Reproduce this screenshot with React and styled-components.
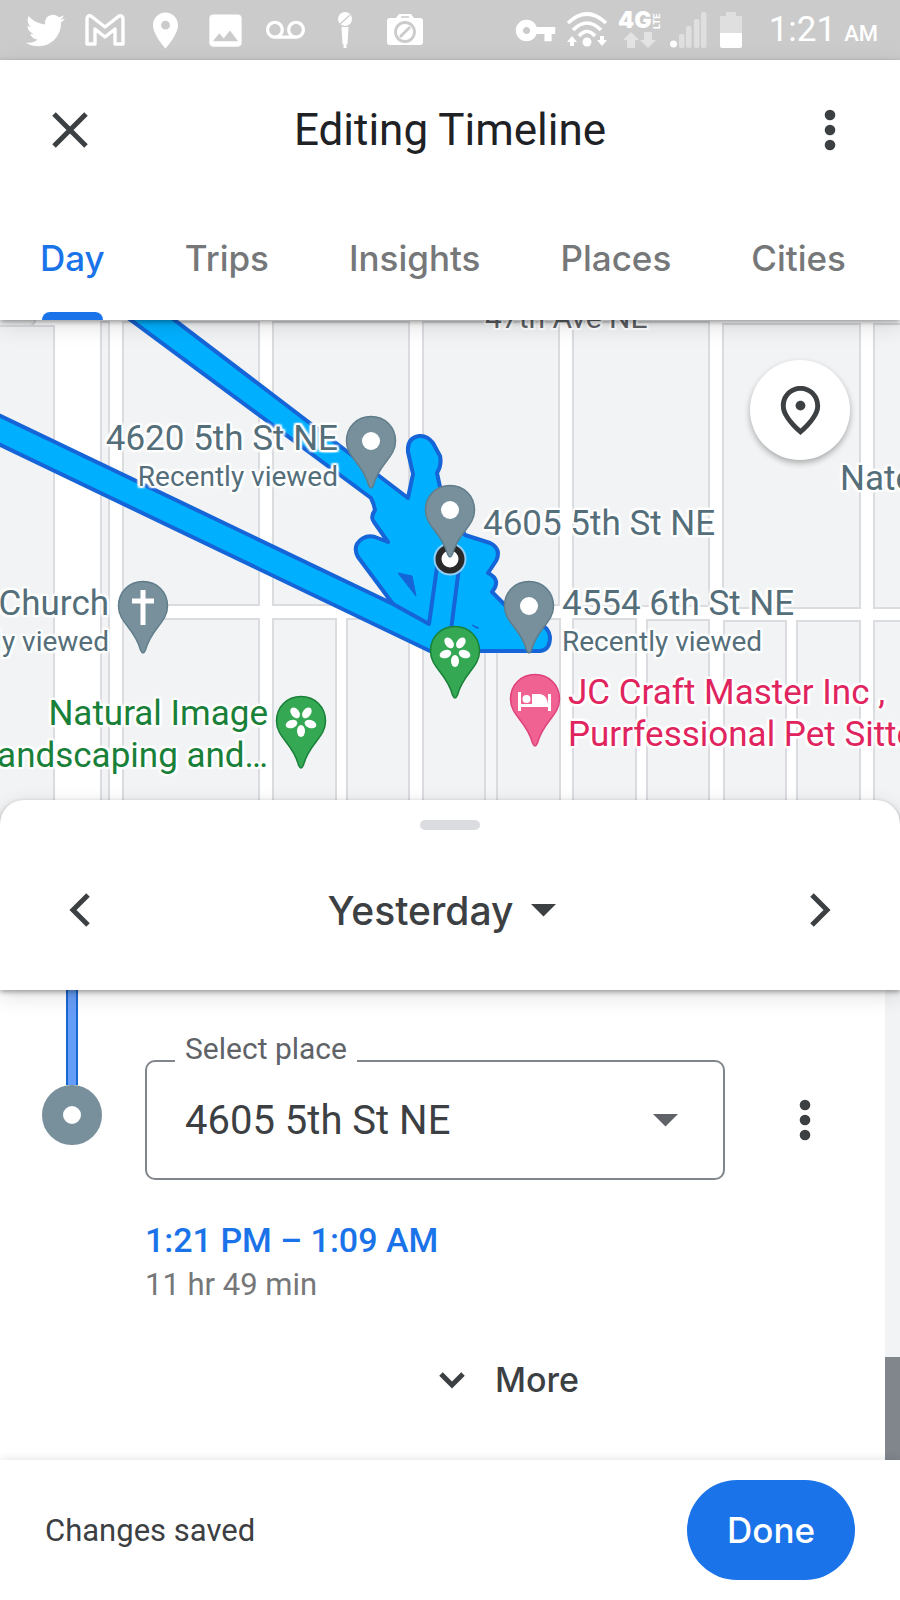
import { useState } from "react";
import styled, { createGlobalStyle } from "styled-components";
import { FaTwitter } from "react-icons/fa";
import {
  MdImage,
  MdOutlinePlace,
  MdPlace,
  MdVoicemail,
  MdVpnKey,
} from "react-icons/md";

const GlobalStyle = createGlobalStyle`
  * {
    box-sizing: border-box;
  }

  body {
    margin: 0;
    background: #fff;
    color: #3c4043;
    font-family: Roboto, sans-serif;
  }

  button, select {
    margin: 0;
    padding: 0;
    border: none;
    background: none;
    color: inherit;
    font-family: inherit;
    cursor: pointer;
  }

  svg {
    display: block;
    flex: none;
  }
`;

const Screen = styled.div`
  display: flex;
  flex-direction: column;
  min-height: 100vh;
  overflow: hidden;
`;

/* status bar */

const StatusBar = styled.div`
  display: flex;
  align-items: center;
  justify-content: space-between;
  height: 60px;
  padding: 0 22px 0 15px;
  background: #cbcbcb;
  color: #fff;
`;

const Notifications = styled.div`
  display: flex;
`;

const NotificationIcon = styled.div`
  display: flex;
  align-items: center;
  justify-content: center;
  width: 60px;
`;

const SystemIcons = styled.div`
  display: flex;
  align-items: center;
  gap: 9px;
`;

const Clock = styled.div`
  margin-left: 18px;
  padding-top: 4px;
  font-size: 35px;
  line-height: 40px;

  small {
    margin-left: 8px;
    font-size: 22px;
    font-weight: 500;
  }
`;

/* header */

const Header = styled.header`
  position: relative;
  z-index: 2;
  background: #fff;
  box-shadow: 0 2px 5px rgba(0, 0, 0, 0.35), 0 6px 22px rgba(0, 0, 0, 0.12);
`;

const Toolbar = styled.div`
  display: flex;
  align-items: center;
  justify-content: space-between;
  height: 140px;
  padding: 0 40px;
`;

const IconButton = styled.button`
  display: flex;
  align-items: center;
  justify-content: center;
  width: 60px;
  height: 60px;
  color: #3c4043;
`;

const Title = styled.h1`
  margin: 0;
  color: #202124;
  font-size: 44px;
  font-weight: 400;
  line-height: 56px;
`;

const Tabs = styled.nav`
  display: flex;
  justify-content: space-between;
  height: 120px;
  padding: 0 54px 0 40px;
`;

const Tab = styled.button`
  position: relative;
  padding-bottom: 4px;
  color: ${(props) => (props.$active ? "#1a73e8" : "#757779")};
  font-family: Inter, sans-serif;
  font-size: 35px;
  font-weight: 500;

  &::after {
    content: "";
    display: ${(props) => (props.$active ? "block" : "none")};
    position: absolute;
    right: 2px;
    bottom: 0;
    left: 2px;
    height: 8px;
    border-radius: 8px 8px 0 0;
    background: #1a73e8;
  }
`;

/* map */

const MapArea = styled.section`
  position: relative;
  height: 504px;
  overflow: hidden;
  background: #f1f3f4;
`;

const MapCanvas = styled.div`
  position: absolute;
  top: 0;
  left: 50%;
  width: 900px;
  height: 504px;
  margin-left: -450px;
`;

const MapPin = styled.svg`
  position: absolute;
  top: ${(props) => props.$y}px;
  left: ${(props) => props.$x - 26}px;
`;

const MapLabel = styled.div`
  position: absolute;
  top: ${(props) => props.$y}px;
  ${(props) =>
    props.$end ? `right: ${900 - props.$x}px;` : `left: ${props.$x}px;`}
  color: ${(props) => props.$color || "#546e7a"};
  font-size: 35px;
  line-height: 42px;
  text-align: ${(props) => (props.$end ? "right" : "left")};
  white-space: nowrap;
  text-shadow: 2px 0 1px #fff, -2px 0 1px #fff, 0 2px 1px #fff, 0 -2px 1px #fff,
    2px 2px 2px #fff, -2px -2px 2px #fff, 2px -2px 2px #fff, -2px 2px 2px #fff;

  small {
    display: block;
    font-size: 28px;
    line-height: 34px;
  }
`;

const PlaceButton = styled.button`
  position: absolute;
  top: 40px;
  right: 50px;
  display: flex;
  align-items: center;
  justify-content: center;
  width: 100px;
  height: 100px;
  border-radius: 50%;
  background: #fff;
  color: #3c4043;
  box-shadow: 0 3px 6px rgba(0, 0, 0, 0.3);
`;

/* bottom sheet */

const Sheet = styled.section`
  position: relative;
  z-index: 1;
  height: 190px;
  margin-top: -24px;
  padding-top: 20px;
  border-radius: 24px 24px 0 0;
  background: #fff;
  box-shadow: 0 2px 5px rgba(0, 0, 0, 0.35), 0 6px 22px rgba(0, 0, 0, 0.12);
`;

const Handle = styled.div`
  width: 60px;
  height: 10px;
  margin: 0 auto;
  border-radius: 5px;
  background: #dadce0;
`;

const DayPicker = styled.div`
  display: flex;
  align-items: center;
  justify-content: space-between;
  height: 160px;
  padding: 0 50px;
`;

const DayButton = styled.button`
  display: flex;
  align-items: center;
  gap: 18px;
  margin-right: 16px;
  font-family: Inter, sans-serif;
  font-size: 39px;
  font-weight: 500;
`;

/* timeline */

const Timeline = styled.main`
  display: flex;
  flex: 1;
`;

const Rail = styled.div`
  display: flex;
  flex-direction: column;
  align-items: center;
  width: 60px;
  margin-left: 42px;
`;

const RailLine = styled.div`
  width: 12px;
  height: 95px;
  border: solid #1967d2;
  border-width: 0 2px;
  background: #669df6;
`;

const RailStop = styled.div`
  width: 60px;
  height: 60px;
  border: 21px solid #78909c;
  border-radius: 50%;
`;

const Visit = styled.div`
  flex: 1;
  padding: 70px 50px 50px 43px;
`;

const PlaceRow = styled.div`
  display: flex;
  align-items: center;
  justify-content: space-between;
`;

const Field = styled.div`
  position: relative;
  flex: 1;
  max-width: 580px;

  label {
    position: absolute;
    top: -29px;
    left: 30px;
    padding: 0 10px;
    background: #fff;
    color: #5f6368;
    font-size: 30px;
    line-height: 36px;
  }

  select {
    width: 100%;
    height: 120px;
    padding: 0 38px;
    border: 2px solid #80868b;
    border-radius: 10px;
    appearance: none;
    color: #3c4043;
    font-size: 40px;
  }

  svg {
    position: absolute;
    top: 54px;
    right: 47px;
    color: #5f6368;
    pointer-events: none;
  }
`;

const TimeRange = styled.button`
  display: block;
  margin-top: 36px;
  color: #1a73e8;
  font-size: 34px;
  font-weight: 500;
  line-height: 48px;
`;

const Duration = styled.div`
  color: #757779;
  font-size: 31px;
  line-height: 42px;
`;

const MoreButton = styled.button`
  display: flex;
  align-items: center;
  gap: 30px;
  margin: 50px auto 0;
  padding-left: 38px;
  font-family: Inter, sans-serif;
  font-size: 34px;
  font-weight: 500;
  line-height: 48px;
`;

const ScrollTrack = styled.div`
  display: flex;
  align-items: flex-end;
  width: 15px;
  background: #f1f3f4;
`;

const ScrollThumb = styled.div`
  width: 100%;
  height: 103px;
  background: #80868b;
`;

const Footer = styled.footer`
  position: relative;
  display: flex;
  align-items: center;
  justify-content: space-between;
  height: 140px;
  padding: 0 45px;
  background: #fff;
  box-shadow: 0 0 10px rgba(0, 0, 0, 0.12);
  font-size: 31px;
`;

const DoneButton = styled.button`
  height: 100px;
  padding: 0 40px;
  border-radius: 50px;
  background: #1a73e8;
  color: #fff;
  font-family: Inter, sans-serif;
  font-size: 35px;
  font-weight: 500;
`;

/* icons */

const GmailIcon = () => (
  <svg width="42" height="34" viewBox="0 0 42 34" fill="none" stroke="#fff" strokeWidth="3.4" strokeLinejoin="round">
    <path d="M3 31V6Q3 2 7 3L21 14 35 3Q39 2 39 6V31H31V16L21 24 11 16V31Z" />
  </svg>
);

const MicIcon = () => (
  <svg width="16" height="38" viewBox="0 0 16 38" fill="#fff">
    <circle cx="8" cy="8" r="7" />
    <path d="M3 13 13 4" stroke="#cbcbcb" strokeWidth="1.2" />
    <path d="M4.500 16H11.500L10.500 33H9.500V37H6.500V33H5.500Z" />
  </svg>
);

const CameraOffIcon = () => (
  <svg width="36" height="32" viewBox="0 0 36 32">
    <path d="M3 4H9L12 0H24L27 4H33Q36 4 36 7V28Q36 31 33 31H3Q0 31 0 28V7Q0 4 3 4Z" fill="#fff" />
    <path d="M14 3H22" stroke="#cbcbcb" strokeWidth="1.500" />
    <circle cx="18" cy="18" r="9.500" fill="none" stroke="#cbcbcb" strokeWidth="2.800" />
    <path d="M13 23 23 13" stroke="#cbcbcb" strokeWidth="2.800" />
  </svg>
);

const WifiIcon = () => (
  <svg width="42" height="36" viewBox="0 0 42 36" fill="none" stroke="#fff" strokeWidth="3.600">
    <path d="M2 11Q21-7 40 11" />
    <path d="M7 18Q21 4 35 18" />
    <path d="M13 24Q21 15 29 24" />
    <circle cx="21" cy="30" r="4.500" fill="#fff" stroke="none" />
    <path d="M6 24L1 30H4V34H8V30H11ZM36 34L31 28H34V24H38V28H41Z" fill="#fff" stroke="none" />
  </svg>
);

const LteIcon = () => (
  <svg width="44" height="38" viewBox="0 0 44 38">
    <text x="1" y="17" fill="#fff" fontFamily="Inter, sans-serif" fontSize="23" fontWeight="900">4G</text>
    <text transform="translate(36 18) rotate(-90)" x="0" y="7" fill="#fff" fontFamily="Inter, sans-serif" fontSize="9" fontWeight="700">LTE</text>
    <path d="M14 21 6 29H10V37H18V29H22ZM31 37 23 29H27V21H35V29H39Z" fill="#e3e3e3" />
  </svg>
);

const SignalIcon = () => (
  <svg width="41" height="36" viewBox="0 0 41 36" fill="#dfdfdf">
    <circle cx="3.500" cy="32" r="3.500" fill="#fff" />
    <rect x="9" y="22" width="5.500" height="14" rx="2" />
    <rect x="16" y="14" width="5.500" height="22" rx="2" />
    <rect x="24" y="7" width="5.500" height="29" rx="2" />
    <rect x="31" y="0" width="5.500" height="36" rx="2" />
  </svg>
);

const BatteryIcon = () => (
  <svg width="22" height="36" viewBox="0 0 22 36">
    <path d="M6 0H16V4H22V22H0V4H6Z" fill="#dfdfdf" />
    <path d="M0 21H22V34Q22 36 20 36H2Q0 36 0 34Z" fill="#fff" />
  </svg>
);

const CloseIcon = () => (
  <svg width="36" height="36" viewBox="0 0 36 36" stroke="currentColor" strokeWidth="5">
    <path d="M2 2 34 34M34 2 2 34" />
  </svg>
);

const DotsIcon = () => (
  <svg width="12" height="42" viewBox="0 0 12 42" fill="currentColor">
    <circle cx="6" cy="6" r="5.300" />
    <circle cx="6" cy="21" r="5.300" />
    <circle cx="6" cy="36" r="5.300" />
  </svg>
);

const ChevronIcon = ({ d, width, height }) => (
  <svg width={width} height={height} viewBox={`0 0 ${width} ${height}`} fill="none" stroke="currentColor" strokeWidth="5">
    <path d={d} />
  </svg>
);

const CaretIcon = () => (
  <svg width="25" height="13" viewBox="0 0 25 13" fill="currentColor">
    <path d="M0 0H25L12.500 12.500Z" />
  </svg>
);

/* map data */

const pinColors = {
  grey: ["#78909c", "#607d8b"],
  green: ["#34a853", "#188038"],
  pink: ["#f06292", "#e0407c"],
};

const pinGlyphs = {
  dot: <circle cx="26" cy="26" r="9" fill="#fff" />,
  cross: <path d="M26 10V45M15 21H37" stroke="#fff" strokeWidth="5" />,
  flower: (
    <g fill="#fff">
      {[36, 108, 180, 252, 324].map((angle) => (
        <ellipse key={angle} cx="26" cy="16" rx="4" ry="6" transform={`rotate(${angle} 26 26)`} />
      ))}
    </g>
  ),
  bed: (
    <g fill="#fff">
      <path d="M9 19H12V31H39V21H42V38H39V34H12V38H9Z" />
      <circle cx="17.500" cy="26" r="4" />
      <path d="M23 21H31Q38 22 39 31H23Z" />
    </g>
  ),
};

const pins = [
  { x: 371, y: 95, color: "grey", glyph: "dot" },
  { x: 529, y: 260, color: "grey", glyph: "dot" },
  { x: 143, y: 260, color: "grey", glyph: "cross" },
  { x: 301, y: 375, color: "green", glyph: "flower" },
  { x: 455, y: 305, color: "green", glyph: "flower" },
  { x: 535, y: 353, color: "pink", glyph: "bed" },
  { x: 450, y: 164, color: "grey", glyph: "dot" },
];

const labels = [
  { x: 338, y: 98, end: true, text: "4620 5th St NE", note: "Recently viewed" },
  { x: 483, y: 183, text: "4605 5th St NE" },
  { x: 840, y: 138, text: "Nate" },
  { x: 562, y: 263, text: "4554 6th St NE", note: "Recently viewed" },
  { x: 109, y: 263, end: true, text: "Church", note: "Recently viewed" },
  { x: 268, y: 373, end: true, text: "Natural Image", color: "#188038" },
  { x: 268, y: 415, end: true, text: "Landscaping and…", color: "#188038" },
  { x: 568, y: 352, text: "JC Craft Master Inc ,", color: "#e0245e" },
  { x: 568, y: 394, text: "Purrfessional Pet Sitters", color: "#e0245e" },
];

// city blocks as [x, y, width, height], the gaps between them are streets
const blocks = [
  [-10, 6, 64, 510],
  [101, 2, 8, 510],
  [123, 2, 136, 283],
  [273, 2, 136, 283],
  [423, 2, 136, 283],
  [573, 2, 136, 284],
  [723, 4, 137, 284],
  [874, 4, 40, 284],
  [123, 299, 136, 220],
  [273, 299, 63, 220],
  [347, 299, 62, 220],
  [423, 299, 62, 220],
  [497, 299, 63, 220],
  [573, 299, 63, 220],
  [647, 300, 62, 220],
  [724, 301, 62, 220],
  [797, 301, 63, 220],
  [874, 301, 40, 220],
];

const MapDrawing = () => (
  <svg width="900" height="504" viewBox="0 0 900 504">
    <rect width="900" height="504" fill="#fff" />
    <g fill="#f1f3f4" stroke="#dadce0" strokeWidth="2">
      {blocks.map(([x, y, width, height]) => (
        <rect key={`${x}-${y}`} x={x} y={y} width={width} height={height} />
      ))}
      <rect x="-10" y="-20" width="45" height="26" rx="6" />
      <rect x="486" y="299" width="10" height="220" fill="#f5f6f7" stroke="none" />
    </g>
    <g fill="#00b0ff" stroke="#1565d8" strokeWidth="4" strokeLinejoin="round">
      <path
        d="M120-8 371 178Q374 184 375 190 370 197 374 202L388 222 375 217Q364 214 357 224 354 230 358 237L393 284-10 91V120L430 331H540Q550 330 550 317 549 308 540 304L507 287 492 272Q502 260 488 253L496 241Q502 229 490 223L465 215 440 167 437 153Q442 145 440 136L433 123Q427 115 419 116 407 118 408 132L413 154 408 178 164-8Z"
      />
      <path d="M393 284 429 304 438 240M460 240 451 310" fill="none" />
      <path d="M398 253 412 256 416 276ZM472 305 479 308H476Z" fill="#1565d8" strokeWidth="1" />
    </g>
    <circle cx="450" cy="239" r="12" fill="#fff" stroke="#90cdf5" strokeWidth="9" />
    <circle cx="450" cy="239" r="11.500" fill="#fff" stroke="#292929" strokeWidth="6" />
    <text x="485" y="8" fill="#5f6368" stroke="#fff" strokeWidth="4" paintOrder="stroke" fontFamily="Roboto, sans-serif" fontSize="30">
      47th Ave NE
    </text>
  </svg>
);

const Pin = ({ x, y, color, glyph }) => {
  const [fill, stroke] = pinColors[color];

  return (
    <MapPin $x={x} $y={y} width="52" height="76" viewBox="0 0 52 76">
      <path
        d="M26 1.500C12 1.500 1.500 12 1.500 26 1.500 43 18 48 23.500 70Q26 76 28.500 70C34 48 50.500 43 50.500 26 50.500 12 40 1.500 26 1.500Z"
        fill={fill}
        stroke={stroke}
        strokeWidth="1.500"
      />
      {pinGlyphs[glyph]}
    </MapPin>
  );
};

const tabs = ["Day", "Trips", "Insights", "Places", "Cities"];

const App = () => {
  const [activeTab, setActiveTab] = useState("Day");
  const [place, setPlace] = useState("4605 5th St NE");

  return (
    <Screen>
      <GlobalStyle />
      <StatusBar>
        <Notifications>
          <NotificationIcon><FaTwitter size={39} /></NotificationIcon>
          <NotificationIcon><GmailIcon /></NotificationIcon>
          <NotificationIcon><MdPlace size={43} /></NotificationIcon>
          <NotificationIcon><MdImage size={43} /></NotificationIcon>
          <NotificationIcon><MdVoicemail size={39} /></NotificationIcon>
          <NotificationIcon><MicIcon /></NotificationIcon>
          <NotificationIcon><CameraOffIcon /></NotificationIcon>
        </Notifications>
        <SystemIcons>
          <MdVpnKey size={43} />
          <WifiIcon />
          <LteIcon />
          <SignalIcon />
          <BatteryIcon />
          <Clock>
            1:21<small>AM</small>
          </Clock>
        </SystemIcons>
      </StatusBar>

      <Header>
        <Toolbar>
          <IconButton aria-label="Close"><CloseIcon /></IconButton>
          <Title>Editing Timeline</Title>
          <IconButton aria-label="More options"><DotsIcon /></IconButton>
        </Toolbar>
        <Tabs>
          {tabs.map((tab) => (
            <Tab key={tab} $active={tab === activeTab} onClick={() => setActiveTab(tab)}>
              {tab}
            </Tab>
          ))}
        </Tabs>
      </Header>

      <MapArea>
        <MapCanvas>
          <MapDrawing />
          {labels.map(({ x, y, end, color, text, note }) => (
            <MapLabel key={`${x}-${y}`} $x={x} $y={y} $end={end} $color={color}>
              {text}
              {note && <small>{note}</small>}
            </MapLabel>
          ))}
          {pins.map((pin) => (
            <Pin key={`${pin.x}-${pin.y}`} {...pin} />
          ))}
        </MapCanvas>
        <PlaceButton aria-label="Show places"><MdOutlinePlace size={59} /></PlaceButton>
      </MapArea>

      <Sheet>
        <Handle />
        <DayPicker>
          <IconButton aria-label="Previous day">
            <ChevronIcon d="M20 3 5 18 20 33" width={24} height={36} />
          </IconButton>
          <DayButton>
            Yesterday
            <CaretIcon />
          </DayButton>
          <IconButton aria-label="Next day">
            <ChevronIcon d="M4 3 19 18 4 33" width={24} height={36} />
          </IconButton>
        </DayPicker>
      </Sheet>

      <Timeline>
        <Rail>
          <RailLine />
          <RailStop />
        </Rail>
        <Visit>
          <PlaceRow>
            <Field>
              <select id="place" value={place} onChange={(e) => setPlace(e.target.value)}>
                <option>4605 5th St NE</option>
                <option>4620 5th St NE</option>
                <option>4554 6th St NE</option>
              </select>
              <label htmlFor="place">Select place</label>
              <CaretIcon />
            </Field>
            <IconButton aria-label="Visit options"><DotsIcon /></IconButton>
          </PlaceRow>
          <TimeRange>1:21 PM – 1:09 AM</TimeRange>
          <Duration>11 hr 49 min</Duration>
          <MoreButton>
            <ChevronIcon d="M2 2 13 13 24 2" width={26} height={17} />
            More
          </MoreButton>
        </Visit>
        <ScrollTrack>
          <ScrollThumb />
        </ScrollTrack>
      </Timeline>

      <Footer>
        <span>Changes saved</span>
        <DoneButton>Done</DoneButton>
      </Footer>
    </Screen>
  );
};

export default App;
